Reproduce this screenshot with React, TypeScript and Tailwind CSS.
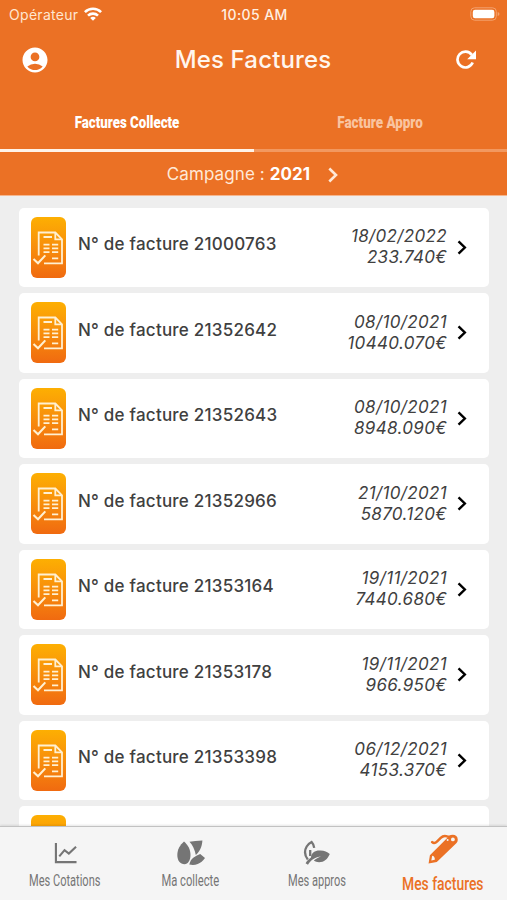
import type { ReactNode } from "react";
import { MdAccountCircle } from "react-icons/md";

const invoices = [
  ["21000763", "18/02/2022", "233.740€"],
  ["21352642", "08/10/2021", "10440.070€"],
  ["21352643", "08/10/2021", "8948.090€"],
  ["21352966", "21/10/2021", "5870.120€"],
  ["21353164", "19/11/2021", "7440.680€"],
  ["21353178", "19/11/2021", "966.950€"],
  ["21353398", "06/12/2021", "4153.370€"],
];

function Chevron({ className }: { className: string }) {
  return (
    <svg viewBox="0 0 10 16" className={className} fill="none" stroke="currentColor" strokeWidth="2.6">
      <path d="M1.3 1.5 8 8 1.3 14.5" />
    </svg>
  );
}

function Wifi() {
  return (
    <svg viewBox="0 0 18 14" className="h-[14px] w-[18px]" fill="none" stroke="#fff" strokeWidth="2.6">
      <path d="M.9 5.1a11.6 11.6 0 0 1 16.2 0M4 8.6a7.2 7.2 0 0 1 10 0" />
      <path d="M9 13.8 6.2 11a3.9 3.9 0 0 1 5.6 0Z" fill="#fff" stroke="none" />
    </svg>
  );
}

function InvoiceIcon() {
  return (
    <div className="h-[61px] w-[35px] shrink-0 rounded-[6px] bg-linear-to-b from-[#fdaf02] to-[#f06a10]">
      <svg viewBox="0 0 35 61" className="h-[61px] w-[35px]" fill="none" stroke="#fff0d2" strokeWidth="1.8">
        <path d="M7.7 38.5V15.5h16.6l6.7 6.8v24H13" />
        <path d="M24.3 15.5v6.8H31" />
        <path d="M12.5 20h8.5M12.5 27.6h6M21 27.6h6.2M12.5 31.4h6M21 31.4h6.2M12.5 35.2h6M21 35.2h6.2M21 41.3h6.2" />
        <path d="m2.5 42 4.5 4.2 7.3-7.8" strokeWidth="2.1" />
      </svg>
    </div>
  );
}

function NavItem({ icon, children }: { icon: ReactNode; children: ReactNode }) {
  return (
    <div className="flex flex-1 flex-col items-center pt-[11px] text-[#757575]">
      <div className="flex h-[30px] items-center">{icon}</div>
      <div className="flex h-[24px] items-center justify-center whitespace-nowrap pt-[1px]">{children}</div>
    </div>
  );
}

export default function App() {
  return (
    <div className="flex h-[900px] w-[507px] flex-col overflow-hidden bg-[#eeeeee] font-[Inter,sans-serif]">
      <header className="shrink-0 bg-[#eb7125] text-white">
        <div className="grid h-7 grid-cols-3 items-center pl-[9px] pr-[7px] text-[14px]">
          <div className="flex items-center gap-[6px]">
            <span className="tracking-[0.3px] text-[#ffe6d0]">Opérateur</span>
            <Wifi />
          </div>
          <span className="text-center font-medium tracking-[0.4px] text-[#fff0e2]">10:05 AM</span>
          <svg viewBox="0 0 30 14" className="h-[14px] w-[30px] justify-self-end">
            <rect x=".8" y=".8" width="25.5" height="12.4" rx="3.8" fill="none" stroke="#f3a26f" />
            <rect x="2.8" y="2.7" width="21.6" height="8.6" rx="2.2" fill="#fff" />
            <path d="M27.7 5v4q1.8-.6 1.8-2t-1.8-2Z" fill="#f3a26f" />
          </svg>
        </div>
        <div className="flex h-[64px] items-center justify-between pl-[20px] pr-[31px]">
          <MdAccountCircle className="size-[30px]" />
          <h1 className="text-[24px] font-medium tracking-[0.15px] text-[#fff6ee]">Mes Factures</h1>
          <svg viewBox="0 0 20 20" className="size-[20px]">
            <path d="M16.7 12.6A7.9 7.9 0 1 1 15.8 4.9" fill="none" stroke="currentColor" strokeWidth="2.7" />
            <path d="M20 .4v8.8h-8.8Z" fill="currentColor" />
          </svg>
        </div>
        <div className="flex h-[60px] font-[Roboto,sans-serif] text-[17px] font-black leading-[60px]">
          <div className="flex w-[254px] justify-center border-b-[3px] border-[#fff3e8]">
            <span className="inline-block scale-x-[0.78] whitespace-nowrap">Factures Collecte</span>
          </div>
          <div className="flex w-[253px] justify-center border-b-[3px] border-[#f2985f] text-[#f9c4a0]">
            <span className="inline-block scale-x-[0.79] whitespace-nowrap">Facture Appro</span>
          </div>
        </div>
        <div className="flex h-[44px] items-center justify-center border-b border-[#f5b68e] pr-[2px] pt-[2px] text-[17px] text-[#ffe9d8]">
          <span className="tracking-[0.1px]">Campagne : <b className="text-white">2021</b></span>
          <Chevron className="ml-[18px] h-[16px] w-[10px]" />
        </div>
      </header>
      <main className="min-h-0 flex-1 overflow-hidden pl-[19px] pr-[18px] pt-[11.5px]">
        {invoices.map(([number, date, amount]) => (
          <div key={number} className="mb-[6px] flex h-[79.5px] items-center rounded-[5px] bg-white pl-[12px] pr-[22px]">
            <InvoiceIcon />
            <span className="ml-[12px] flex-1 whitespace-nowrap pb-[5px] text-[17px] font-medium tracking-[0.23px] text-[#404040]">N° de facture {number}</span>
            <div className="text-right text-[17px] italic leading-[21px] tracking-[0.35px] text-[#404040]">
              <div>{date}</div>
              <div>{amount}</div>
            </div>
            <Chevron className="ml-[10px] h-[15px] w-[10px] text-black" />
          </div>
        ))}
        <div className="flex h-[79.5px] items-center rounded-[5px] bg-white pl-[12px]">
          <InvoiceIcon />
        </div>
      </main>
      <nav className="relative flex h-[74px] shrink-0 border-t border-[#c2c2c2] bg-[#f5f5f5] font-[Roboto,sans-serif] text-[16px] shadow-[0_-1px_2px_rgba(0,0,0,0.1)]">
        <NavItem icon={
          <svg viewBox="0 0 24 24" className="ml-[4px] size-[23px]" fill="none" stroke="currentColor" strokeWidth="2.2">
            <path d="M2 1v20h21.5M5.5 15l5.5-6.5 4.5 3.5L23 5" />
          </svg>
        }><span className="ml-[2px] inline-block scale-x-[0.69]">Mes Cotations</span></NavItem>
        <NavItem icon={
          <svg viewBox="0 0 28 26" className="ml-[2px] h-[26px] w-[28px]" fill="currentColor">
            <path d="M7 1.4C3 5 .3 9.5.3 15c0 5.7 3 9.2 7.2 9.2 3.4 0 6-3.8 6-9.2C13.5 9.2 10.8 4.6 7 1.4Z" />
            <path d="M12.5 1.8Q18 .6 25.4.4c-.2 3-.8 6-2.2 8.9-1 2.2-2.5 4.1-4.4 5.7C17.8 9.8 15.8 5.4 12.5 1.8Z" />
            <path d="M12.3 24.6c.8-3 1.7-5.4 4.3-7.1 2.2-1.5 4.3-2.7 6.6-3.6l4.8 4.2c-2 2.9-4.5 5-7.3 6-2.6 1-5.3 1.2-8.4.5Z" />
          </svg>
        }><span className="inline-block scale-x-[0.7]">Ma collecte</span></NavItem>
        <NavItem icon={
          <svg viewBox="0 0 28 26" className="h-[26px] w-[28px]" fill="currentColor">
            <path d="M4.8 19.5C1.8 15.5 1.3 10.5 3.7 6.5 5 4.3 6.7 2.9 8.6 2c1.5 1.6 2.3 3.4 2.6 5.8M7.2 10v6" fill="none" stroke="currentColor" strokeWidth="2.3" />
            <path d="M8 17.5c.3-5 4.4-7.3 9.6-6.9 4 .3 6.4 1.1 9.2 3.4-2.3 5.2-5.7 8.2-10.7 8.2-2.2 0-3.7-.5-5.3-1.6 2.3-2 4.4-3.2 7.2-4.2-5.3.2-10.2 3.4-13 8.3L2.6 23.2C3.8 21 6 19 8 17.5Z" />
          </svg>
        }><span className="inline-block scale-x-[0.69]">Mes appros</span></NavItem>
        <div className="flex flex-1 flex-col items-center pt-[7px] text-[#eb7125]">
          <svg viewBox="0 0 30 30" className="mr-[2px] size-[30px]">
            <path d="M.6 29.4 1.9 21.3 21.2 2.1a5 5 0 0 1 7.1 7.1L8.8 28 .6 29.4Z" fill="currentColor" />
            <path d="M4.2 8.2c1.7 1.6 3.3.9 5-.8l3.5-3.5c1.8-1.8 4-2.5 6.5-1.5l3.2.3" fill="none" stroke="currentColor" strokeWidth="2.5" strokeLinecap="round" />
            <circle cx="24.9" cy="5.4" r="1.9" fill="#f5f5f5" />
            <circle cx="19.6" cy="5.9" r="1" fill="#f5f5f5" />
            <path d="m3.3 26.4.9-4.6q1.2.1 2 1.2t.6 2.7Z" fill="#f5f5f5" />
          </svg>
          <span className="mr-[2px] mt-[7px] inline-block scale-x-[0.73] whitespace-nowrap text-[19px] font-medium leading-[26px]">Mes factures</span>
        </div>
      </nav>
    </div>
  );
}
